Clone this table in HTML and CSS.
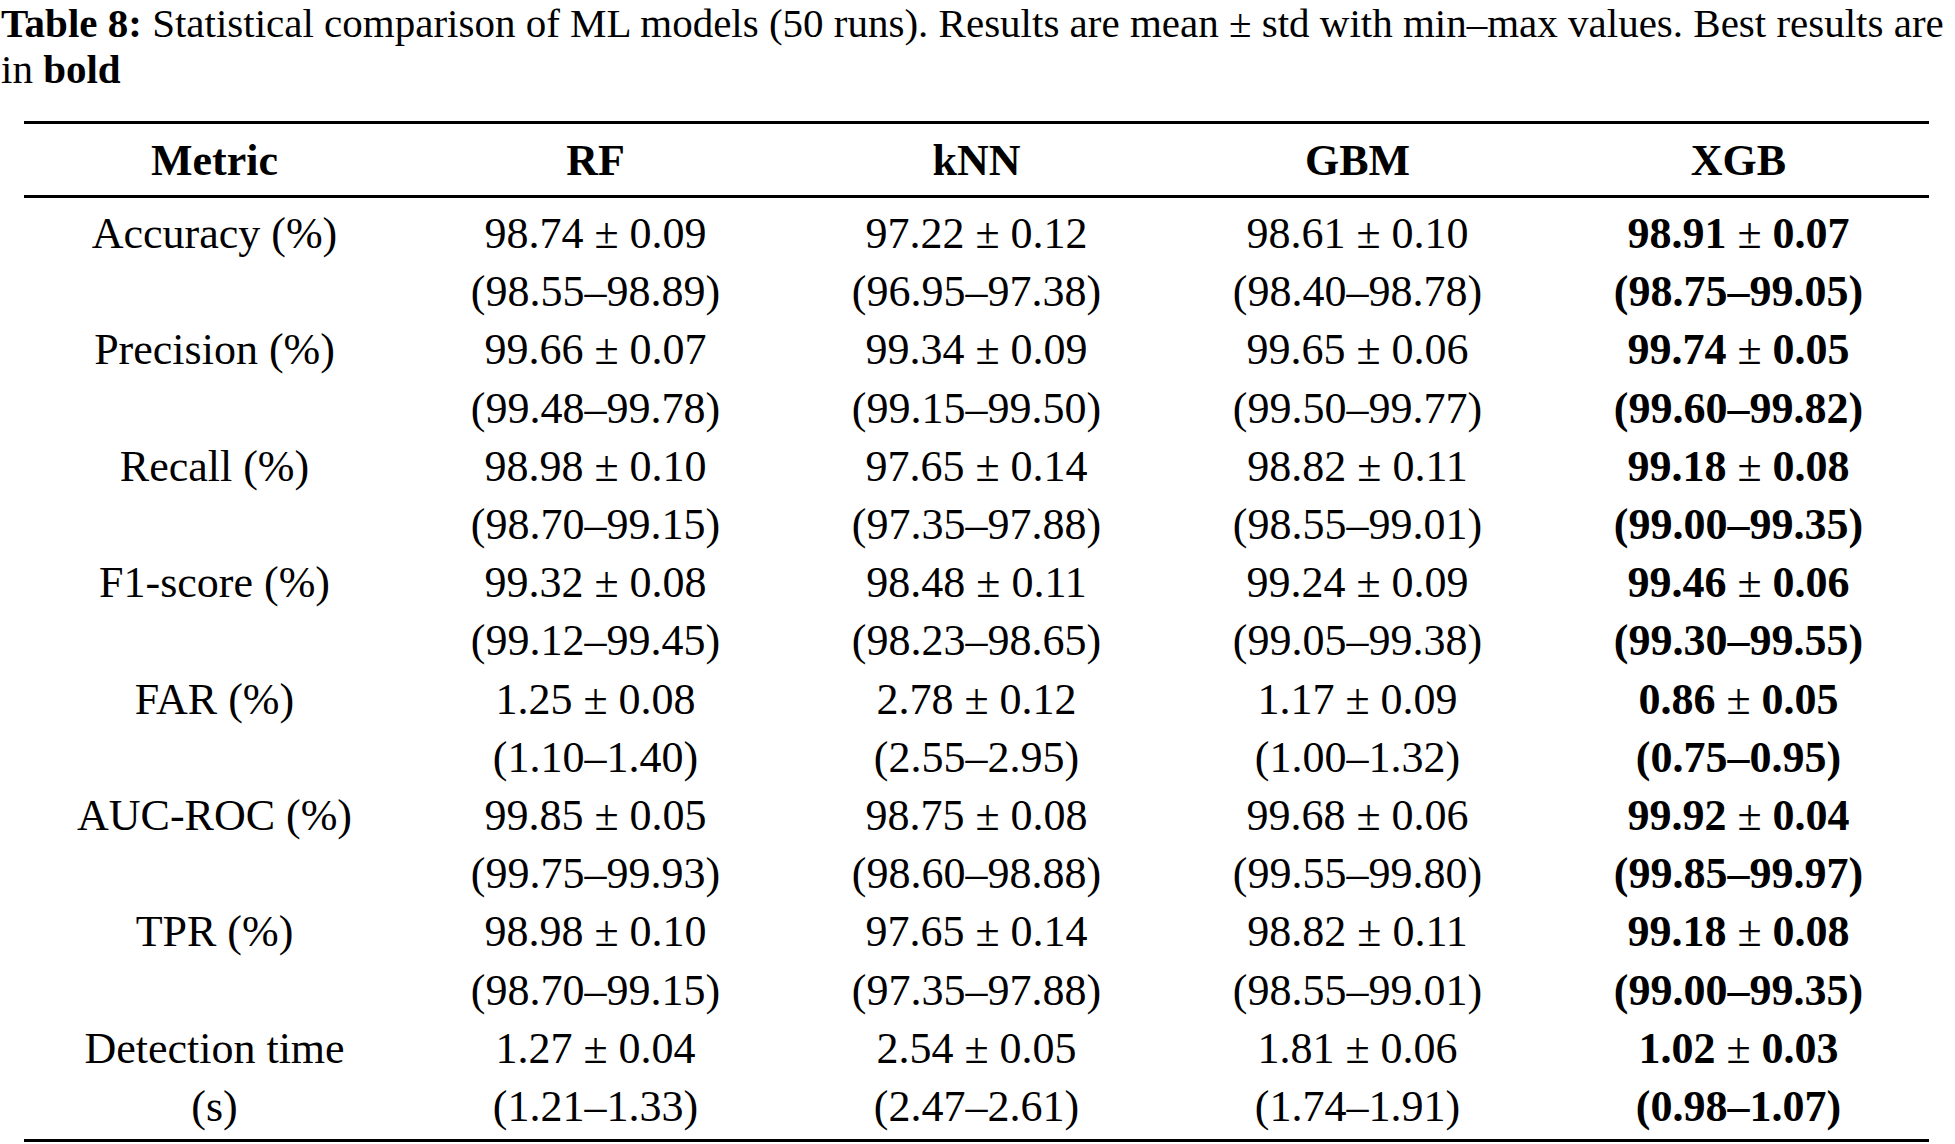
FILE: index.html
```html
<!DOCTYPE html>
<html>
<head>
<meta charset="utf-8">
<link rel="stylesheet" href="styles.css">
</head>
<body>
<p class="caption"><b>Table 8:</b> Statistical comparison of ML models (50 runs). Results are mean ± std with min–max values. Best results are<br>in <b>bold</b></p>
<table class="stats">
<colgroup><col><col><col><col><col></colgroup>
<thead>
<tr><th>Metric</th><th>RF</th><th>kNN</th><th>GBM</th><th>XGB</th></tr>
</thead>
<tbody>
<tr class="first"><td>Accuracy (%)</td><td>98.74 ± 0.09<br>(98.55–98.89)</td><td>97.22 ± 0.12<br>(96.95–97.38)</td><td>98.61 ± 0.10<br>(98.40–98.78)</td><td><b>98.91</b> ± <b>0.07</b><br><b>(98.75–99.05)</b></td></tr>
<tr><td>Precision (%)</td><td>99.66 ± 0.07<br>(99.48–99.78)</td><td>99.34 ± 0.09<br>(99.15–99.50)</td><td>99.65 ± 0.06<br>(99.50–99.77)</td><td><b>99.74</b> ± <b>0.05</b><br><b>(99.60–99.82)</b></td></tr>
<tr><td>Recall (%)</td><td>98.98 ± 0.10<br>(98.70–99.15)</td><td>97.65 ± 0.14<br>(97.35–97.88)</td><td>98.82 ± 0.11<br>(98.55–99.01)</td><td><b>99.18</b> ± <b>0.08</b><br><b>(99.00–99.35)</b></td></tr>
<tr><td>F1-score (%)</td><td>99.32 ± 0.08<br>(99.12–99.45)</td><td>98.48 ± 0.11<br>(98.23–98.65)</td><td>99.24 ± 0.09<br>(99.05–99.38)</td><td><b>99.46</b> ± <b>0.06</b><br><b>(99.30–99.55)</b></td></tr>
<tr><td>FAR (%)</td><td>1.25 ± 0.08<br>(1.10–1.40)</td><td>2.78 ± 0.12<br>(2.55–2.95)</td><td>1.17 ± 0.09<br>(1.00–1.32)</td><td><b>0.86</b> ± <b>0.05</b><br><b>(0.75–0.95)</b></td></tr>
<tr><td>AUC-ROC (%)</td><td>99.85 ± 0.05<br>(99.75–99.93)</td><td>98.75 ± 0.08<br>(98.60–98.88)</td><td>99.68 ± 0.06<br>(99.55–99.80)</td><td><b>99.92</b> ± <b>0.04</b><br><b>(99.85–99.97)</b></td></tr>
<tr><td>TPR (%)</td><td>98.98 ± 0.10<br>(98.70–99.15)</td><td>97.65 ± 0.14<br>(97.35–97.88)</td><td>98.82 ± 0.11<br>(98.55–99.01)</td><td><b>99.18</b> ± <b>0.08</b><br><b>(99.00–99.35)</b></td></tr>
<tr class="last"><td>Detection time<br>(s)</td><td>1.27 ± 0.04<br>(1.21–1.33)</td><td>2.54 ± 0.05<br>(2.47–2.61)</td><td>1.81 ± 0.06<br>(1.74–1.91)</td><td><b>1.02</b> ± <b>0.03</b><br><b>(0.98–1.07)</b></td></tr>
</tbody>
</table>
</body>
</html>
```
FILE: styles.css
```css
html, body {
  margin: 0;
  padding: 0;
  background: #ffffff;
  color: #000000;
  font-family: "Liberation Serif", "Times New Roman", serif;
}

.caption {
  margin: 0;
  padding-left: 1px;
  font-size: 41px;
  line-height: 46px;
  white-space: nowrap;
}

.stats {
  margin-left: 24px;
  margin-top: 29px;
  width: 1905px;
  table-layout: fixed;
  border-collapse: collapse;
  border-top: 3px solid #000;
  border-bottom: 3px solid #000;
  font-size: 44px;
  line-height: 58.2px;
}

.stats th {
  height: 68px;
  padding: 3px 0 0 0;
  text-align: center;
  vertical-align: middle;
  font-weight: bold;
  border-bottom: 3px solid #000;
}

.stats td {
  padding: 0;
  text-align: center;
  vertical-align: top;
}

.stats tr.first td {
  padding-top: 7px;
}

.stats tr.last td {
  padding-bottom: 3px;
}
```
